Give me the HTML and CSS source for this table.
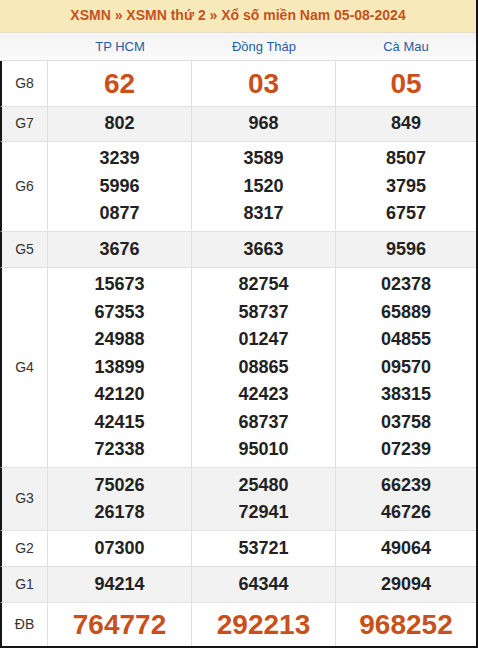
FILE: index.html
```html
<!DOCTYPE html>
<html lang="vi">
<head>
<meta charset="utf-8">
<title>XSMN 05-08-2024</title>
<link rel="stylesheet" href="styles.css">
</head>
<body>
<div class="wrap">
  <div class="title">XSMN » XSMN thứ 2 » Xổ số miền Nam 05-08-2024</div>
  <table class="kq">
    <colgroup>
      <col class="c-lbl"><col class="c-p"><col class="c-p"><col class="c-p3">
    </colgroup>
    <thead>
      <tr class="prov">
        <th></th><th>TP HCM</th><th>Đồng Tháp</th><th>Cà Mau</th>
      </tr>
    </thead>
    <tbody>
      <tr class="g8"><td class="lbl">G8</td><td class="big">62</td><td class="big">03</td><td class="big">05</td></tr>
      <tr class="alt r35"><td class="lbl">G7</td><td>802</td><td>968</td><td>849</td></tr>
      <tr class="r90"><td class="lbl">G6</td>
        <td><div>3239</div><div>5996</div><div>0877</div></td>
        <td><div>3589</div><div>1520</div><div>8317</div></td>
        <td><div>8507</div><div>3795</div><div>6757</div></td></tr>
      <tr class="alt r36"><td class="lbl">G5</td><td>3676</td><td>3663</td><td>9596</td></tr>
      <tr class="r200"><td class="lbl">G4</td>
        <td><div>15673</div><div>67353</div><div>24988</div><div>13899</div><div>42120</div><div>42415</div><div>72338</div></td>
        <td><div>82754</div><div>58737</div><div>01247</div><div>08865</div><div>42423</div><div>68737</div><div>95010</div></td>
        <td><div>02378</div><div>65889</div><div>04855</div><div>09570</div><div>38315</div><div>03758</div><div>07239</div></td></tr>
      <tr class="alt r63"><td class="lbl">G3</td>
        <td><div>75026</div><div>26178</div></td>
        <td><div>25480</div><div>72941</div></td>
        <td><div>66239</div><div>46726</div></td></tr>
      <tr class="r36"><td class="lbl">G2</td><td>07300</td><td>53721</td><td>49064</td></tr>
      <tr class="alt r36"><td class="lbl">G1</td><td>94214</td><td>64344</td><td>29094</td></tr>
      <tr class="db"><td class="lbl">ĐB</td><td class="big">764772</td><td class="big">292213</td><td class="big">968252</td></tr>
    </tbody>
  </table>
</div>
</body>
</html>
```

FILE: styles.css
```css
html, body {
  margin: 0;
  padding: 0;
  background: #fff;
}
body {
  font-family: "Liberation Sans", Arial, sans-serif;
  color: #222;
}
.wrap {
  width: 476px;
  border-right: 2px solid #161616;
  border-bottom: 2px solid #161616;
}
.title {
  height: 33px;
  box-sizing: border-box;
  border-bottom: 1px solid #e2dcc8;
  background: #f8e9bb;
  color: #c5521b;
  font-weight: bold;
  font-size: 14px;
  text-align: center;
  line-height: 31px;
}
.kq {
  width: 476px;
  border-collapse: separate;
  border-spacing: 0;
  table-layout: fixed;
}
.c-lbl { width: 48px; }
.c-p { width: 144px; }
.c-p3 { width: 140px; }
.kq th, .kq td {
  box-sizing: border-box;
  border: 0;
  border-right: 1px solid #e0e0e0;
  border-bottom: 1px solid #e0e0e0;
  text-align: center;
  padding: 0;
}
.kq th:last-child, .kq td:last-child { border-right: 0; }
.prov th {
  height: 28px;
  background: linear-gradient(#f3f3f3, #fbfbfb);
  color: #1f5ea6;
  font-weight: normal;
  font-size: 13px;
  border-right: 0;
}
.kq td {
  font-weight: bold;
  font-size: 18px;
  color: #222;
  line-height: 27.5px;
}
.kq td.lbl {
  font-weight: normal;
  font-size: 14px;
  color: #333;
  border-left: 2px solid #161616;
}
.alt td { background: #f2f2f2; }
.g8 td { height: 46px; }
.r35 td { height: 35px; }
.r36 td { height: 36px; }
.r90 td { height: 90px; }
.r200 td { height: 200px; }
.r63 td { height: 63px; }
.db td { height: 43px; border-bottom: 0; }
.kq td.big {
  color: #c9501a;
  font-size: 28px;
  line-height: 32px;
}
```
